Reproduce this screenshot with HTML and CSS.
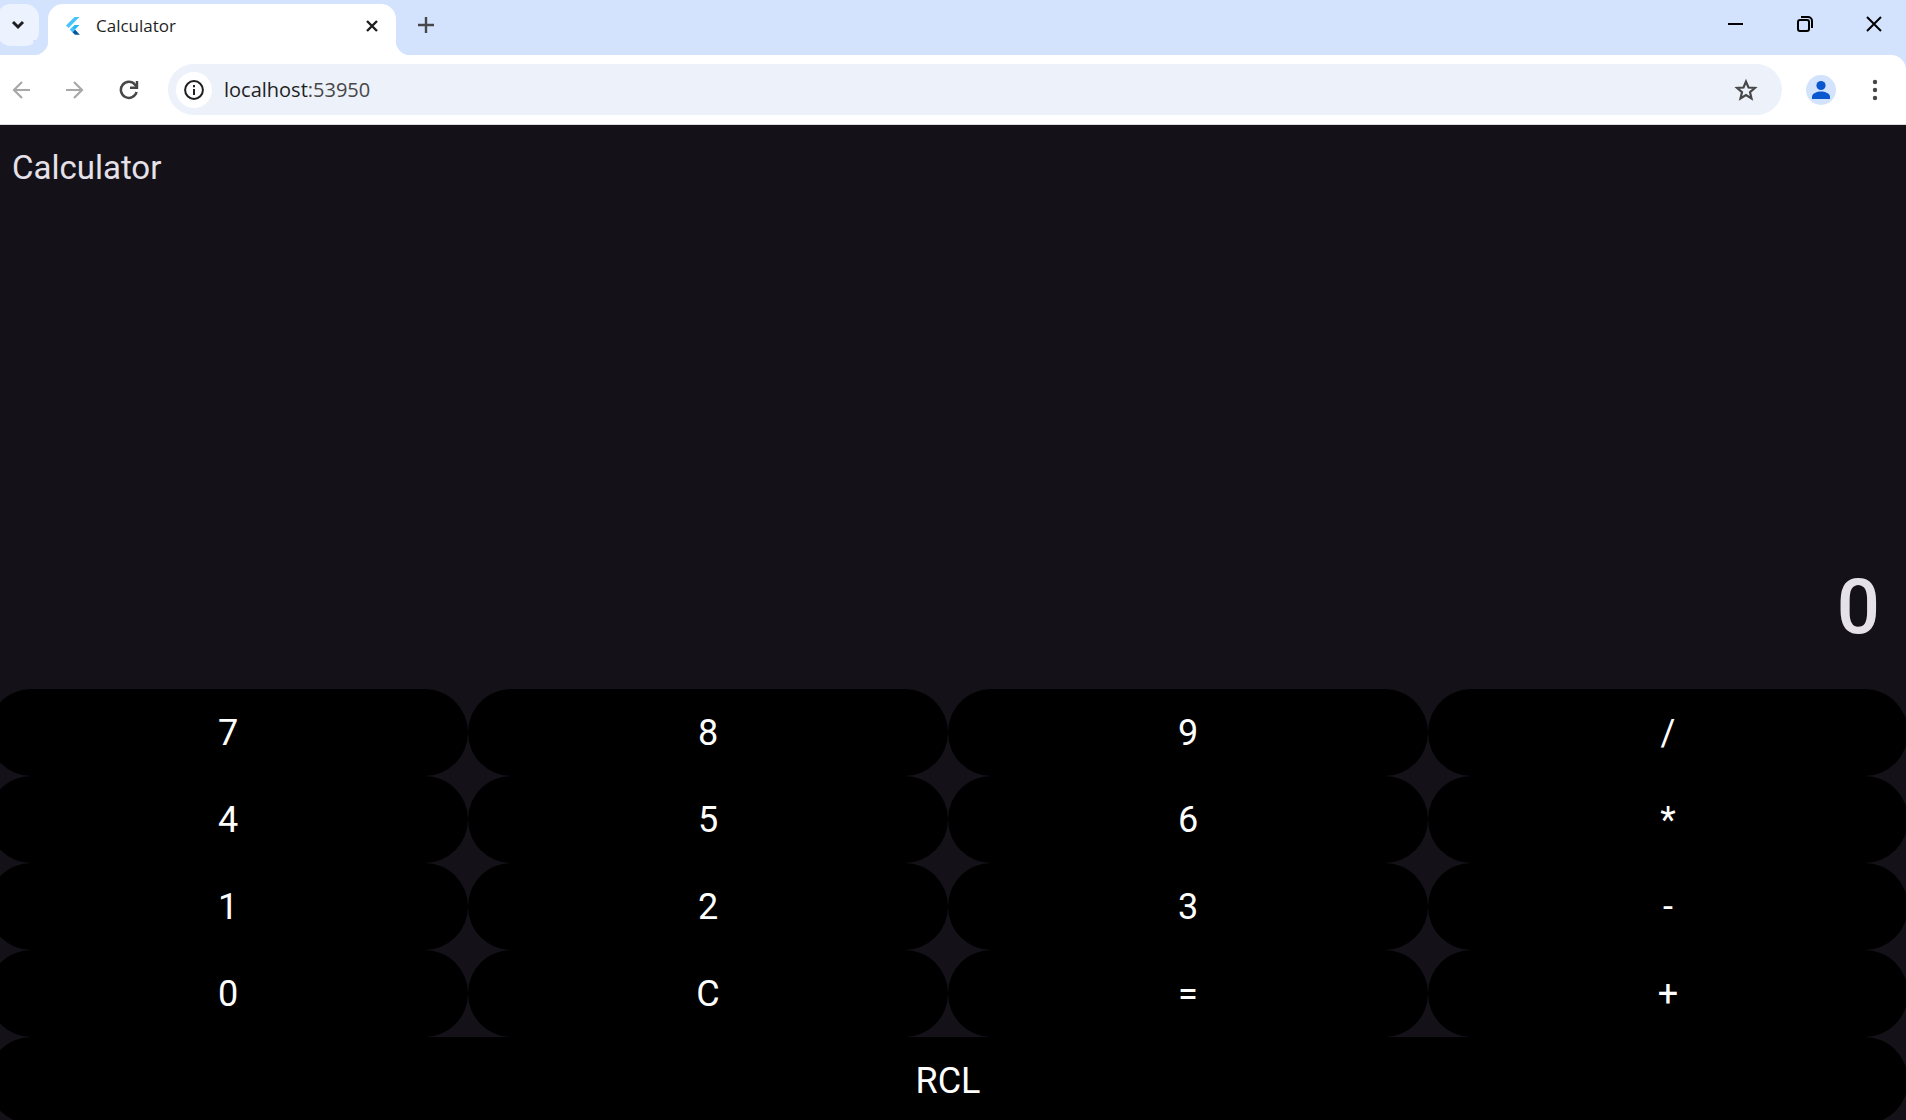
FILE: index.html
```html
<!DOCTYPE html>
<html lang="en">
<head>
<meta charset="utf-8">
<title>Calculator</title>
<link rel="stylesheet" href="styles.css">
</head>
<body>
<header class="browser">
  <div class="tab-strip">
    <button class="tab-search" aria-label="Search tabs">
      <svg width="14" height="10" viewBox="0 0 14 10"><path d="M2 2l5 5 5-5" fill="none" stroke="#1f1f1f" stroke-width="3"/></svg>
    </button>
    <div class="tab">
      <svg class="favicon" width="18" height="20" viewBox="0 0 18 20">
        <path d="M9.500 1h5L3.500 12 1 9.500z" fill="#47c5fb"/>
        <path d="M9.500 9h5L7.500 16 5 13.500z" fill="#29b6f6"/>
        <path d="M5 13.500l2.500-2.500 3 3-3 2.500z" fill="#47c5fb"/>
        <path d="M7.500 16.300l2.700-2.600 4.600 5H10z" fill="#01579b"/>
      </svg>
      <span class="tab-title">Calculator</span>
      <button class="icon-button" aria-label="Close tab">
        <svg width="14" height="14" viewBox="0 0 14 14"><path d="M2 2l10 10M12 2L2 12" stroke="#1f1f1f" stroke-width="2.400"/></svg>
      </button>
    </div>
    <button class="icon-button new-tab" aria-label="New tab">
      <svg width="16" height="16" viewBox="0 0 16 16"><path d="M8 0v16M0 8h16" stroke="#474747" stroke-width="2.400"/></svg>
    </button>
    <div class="window-controls">
      <button class="icon-button" aria-label="Minimize">
        <svg width="16" height="16" viewBox="0 0 16 16"><path d="M0 8h15" stroke="#000" stroke-width="2"/></svg>
      </button>
      <button class="icon-button" aria-label="Restore">
        <svg width="16" height="16" viewBox="0 0 16 16" fill="none" stroke="#000" stroke-width="2"><rect x="1" y="4" width="11" height="11" rx="2"/><path d="M4 1h7a4 4 0 0 1 4 4v7"/></svg>
      </button>
      <button class="icon-button" aria-label="Close window">
        <svg width="16" height="16" viewBox="0 0 16 16"><path d="M1 1l14 14M15 1L1 15" stroke="#000" stroke-width="2"/></svg>
      </button>
    </div>
  </div>
  <div class="toolbar">
    <nav class="nav-buttons">
      <button class="icon-button" aria-label="Back">
        <svg width="20" height="20" viewBox="0 0 20 20"><path d="M19 10H3M11 2l-8 8 8 8" fill="none" stroke="#a8a8a8" stroke-width="2.200"/></svg>
      </button>
      <button class="icon-button" aria-label="Forward">
        <svg width="20" height="20" viewBox="0 0 20 20"><path d="M1 10h16M9 2l8 8-8 8" fill="none" stroke="#a8a8a8" stroke-width="2.200"/></svg>
      </button>
      <button class="icon-button" aria-label="Reload">
        <svg width="20" height="20" viewBox="0 0 20 20"><path d="M17.600 12A8 8 0 1 1 16 4.700L17.500 6.500" fill="none" stroke="#474747" stroke-width="2.500"/><path d="M18 1v6.800h-7" fill="none" stroke="#474747" stroke-width="2.400"/></svg>
      </button>
    </nav>
    <div class="address">
      <button class="site-info" aria-label="Site information">
        <svg width="20" height="20" viewBox="0 0 20 20"><circle cx="10" cy="10" r="8.900" fill="none" stroke="#1f1f1f" stroke-width="2"/><path d="M10 9v6M10 5v2.200" stroke="#1f1f1f" stroke-width="2"/></svg>
      </button>
      <a class="url" href="#">localhost<span class="port">:53950</span></a>
      <button class="icon-button" aria-label="Bookmark this page">
        <svg width="24" height="24" viewBox="0 0 24 24"><path d="M12 3.600l2.500 5.900 6.400.5-4.900 4.200 1.500 6.200-5.500-3.300-5.500 3.300L8 14.200 3.100 10l6.400-.5z" fill="none" stroke="#474747" stroke-width="2.200"/></svg>
      </button>
    </div>
    <button class="icon-button profile" aria-label="Profile">
      <svg width="30" height="30" viewBox="0 0 30 30"><circle cx="15" cy="15" r="15" fill="#d3e3fd"/><circle cx="15" cy="10.500" r="4.600" fill="#0b57d0"/><path d="M6 24v-2.500c0-3 5-5 9-5s9 2 9 5V24z" fill="#0b57d0"/></svg>
    </button>
    <button class="icon-button menu" aria-label="Menu">
      <svg width="6" height="22" viewBox="0 0 6 22" fill="#474747"><circle cx="3" cy="3" r="2.200"/><circle cx="3" cy="11" r="2.200"/><circle cx="3" cy="19" r="2.200"/></svg>
    </button>
  </div>
</header>
<main class="app">
  <h1 class="app-title">Calculator</h1>
  <output class="display">0</output>
  <div class="keypad">
    <button class="key">7</button>
    <button class="key">8</button>
    <button class="key">9</button>
    <button class="key">/</button>
    <button class="key">4</button>
    <button class="key">5</button>
    <button class="key">6</button>
    <button class="key">*</button>
    <button class="key">1</button>
    <button class="key">2</button>
    <button class="key">3</button>
    <button class="key">-</button>
    <button class="key">0</button>
    <button class="key">C</button>
    <button class="key">=</button>
    <button class="key">+</button>
    <button class="key key-wide">RCL</button>
  </div>
</main>
</body>
</html>
```
FILE: styles.css
```css
* {
  box-sizing: border-box;
}

body {
  margin: 0;
  height: 100vh;
  display: flex;
  flex-direction: column;
  overflow: hidden;
  background: #141218;
  font-family: "Open Sans", "Noto Sans", sans-serif;
}

button {
  border: 0;
  padding: 0;
  background: none;
  font: inherit;
}

svg {
  display: block;
}

.icon-button {
  display: flex;
  flex: none;
}

/* Tab strip */
.browser {
  background: #d3e3fd;
}

.tab-strip {
  display: flex;
  height: 55px;
  padding-top: 4px;
  overflow: hidden;
}

.tab-search {
  display: flex;
  align-items: center;
  justify-content: center;
  width: 42px;
  height: 42px;
  margin-left: -3px;
  border-radius: 14px;
  background: #ecf2fe;
}

.tab {
  position: relative;
  display: flex;
  align-items: center;
  width: 348px;
  margin-left: 9px;
  padding: 0 17px 8px;
  border-radius: 15px 15px 0 0;
  background: #fff;
}

/* Concave feet where the tab meets the toolbar */
.tab::before,
.tab::after {
  content: "";
  position: absolute;
  bottom: 0;
  width: 15px;
  height: 15px;
}

.tab::before {
  right: 100%;
  background: radial-gradient(circle at 0 0, #d3e3fd 15px, #fff 16px);
}

.tab::after {
  left: 100%;
  background: radial-gradient(circle at 100% 0, #d3e3fd 15px, #fff 16px);
}

.tab-title {
  flex: 1;
  padding-left: 13px;
  font-size: 17px;
  line-height: 24px;
  color: #1f1f1f;
}

.new-tab {
  align-self: flex-start;
  margin: 13px 0 0 22px;
}

.window-controls {
  display: flex;
  gap: 53px;
  margin: 12px 24px 0 auto;
  align-self: flex-start;
}

/* Toolbar */
.toolbar {
  display: flex;
  align-items: center;
  height: 70px;
  padding: 0 28px 0 11px;
  border-bottom: 1px solid #dcdcdc;
  border-radius: 0 15px 0 0;
  background: #fff;
}

.nav-buttons {
  display: flex;
  gap: 34px;
}

.address {
  display: flex;
  flex: 1;
  align-items: center;
  height: 51px;
  margin-left: 29px;
  padding: 0 24px 0 8px;
  border-radius: 26px;
  background: #ecf1fa;
}

.site-info {
  display: flex;
  align-items: center;
  justify-content: center;
  width: 36px;
  height: 36px;
  border-radius: 50%;
  background: #fff;
}

.url {
  flex: 1;
  padding-left: 12px;
  font-size: 20px;
  line-height: 28px;
  color: #1f1f1f;
  text-decoration: none;
}

.port {
  color: #474747;
}

.profile {
  margin-left: 24px;
}

.menu {
  margin-left: 36px;
}

/* Calculator */
.app {
  display: flex;
  flex: 1;
  flex-direction: column;
  min-height: 0;
  font-family: Roboto, sans-serif;
}

.app-title {
  margin: 0;
  padding: 0 12px;
  font-size: 33px;
  font-weight: 400;
  line-height: 86px;
  color: #e6e0e9;
}

.display {
  margin-top: auto;
  padding: 0 26px 38px;
  font-size: 76px;
  font-weight: 500;
  line-height: 88px;
  text-align: right;
  color: #e6e0e9;
}

/* The pad runs slightly past the window on the left, right and bottom */
.keypad {
  display: grid;
  grid-template-columns: repeat(4, 1fr);
  grid-auto-rows: 87px;
  margin: 0 -2px -4px -12px;
}

.key {
  border-radius: 44px;
  background: #000;
  font-size: 36px;
  color: #fff;
}

.key-wide {
  grid-column: 1 / -1;
}
```
